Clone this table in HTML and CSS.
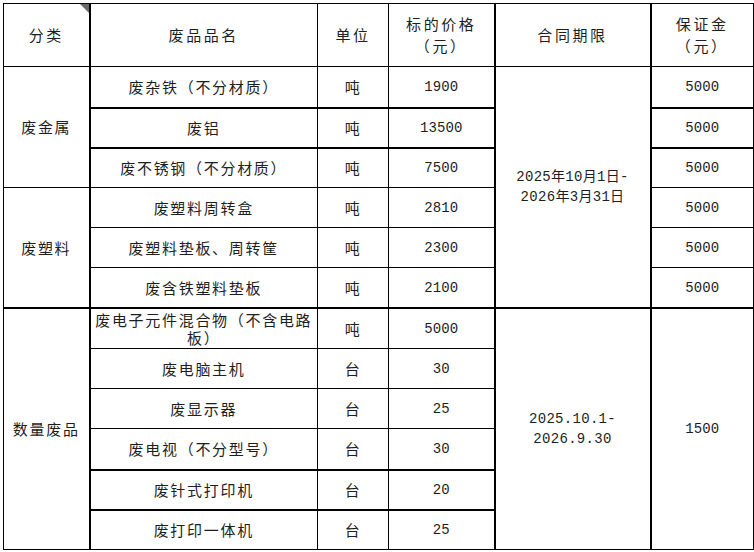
FILE: index.html
```html
<!DOCTYPE html>
<html lang="zh-CN">
<head>
<meta charset="utf-8">
<title>废品价格表</title>
<link rel="stylesheet" href="styles.css">
</head>
<body>
<table class="sheet">
  <colgroup>
    <col class="w1"><col class="w2"><col class="w3"><col class="w4"><col class="w5"><col class="w6">
  </colgroup>
  <thead>
    <tr class="head">
      <th class="cat flagged">分类<span class="flag"></span></th>
      <th>废品品名</th>
      <th>单位</th>
      <th>标的价格<br>（元）</th>
      <th class="term">合同期限</th>
      <th>保证金<br>（元）</th>
    </tr>
  </thead>
  <tbody>
    <tr class="tall">
      <td class="cat" rowspan="3">废金属</td>
      <td>废杂铁（不分材质）</td>
      <td>吨</td>
      <td class="num">1900</td>
      <td class="term date" rowspan="6">2025年10月1日-<br>2026年3月31日</td>
      <td class="num">5000</td>
    </tr>
    <tr class="thick">
      <td>废铝</td>
      <td>吨</td>
      <td class="num">13500</td>
      <td class="num">5000</td>
    </tr>
    <tr class="thick">
      <td>废不锈钢（不分材质）</td>
      <td>吨</td>
      <td class="num">7500</td>
      <td class="num">5000</td>
    </tr>
    <tr>
      <td class="cat" rowspan="3">废塑料</td>
      <td>废塑料周转盒</td>
      <td>吨</td>
      <td class="num">2810</td>
      <td class="num">5000</td>
    </tr>
    <tr>
      <td>废塑料垫板、周转筐</td>
      <td>吨</td>
      <td class="num">2300</td>
      <td class="num">5000</td>
    </tr>
    <tr>
      <td>废含铁塑料垫板</td>
      <td>吨</td>
      <td class="num">2100</td>
      <td class="num">5000</td>
    </tr>
    <tr class="thick-tall">
      <td class="cat" rowspan="6">数量废品</td>
      <td class="wrap">废电子元件混合物（不含电路板）</td>
      <td>吨</td>
      <td class="num">5000</td>
      <td class="term date" rowspan="6">2025.10.1-<br>2026.9.30</td>
      <td class="num" rowspan="6">1500</td>
    </tr>
    <tr>
      <td>废电脑主机</td>
      <td>台</td>
      <td class="num">30</td>
    </tr>
    <tr>
      <td>废显示器</td>
      <td>台</td>
      <td class="num">25</td>
    </tr>
    <tr class="tall">
      <td>废电视（不分型号）</td>
      <td>台</td>
      <td class="num">30</td>
    </tr>
    <tr class="thick">
      <td>废针式打印机</td>
      <td>台</td>
      <td class="num">20</td>
    </tr>
    <tr class="thick">
      <td>废打印一体机</td>
      <td>台</td>
      <td class="num">25</td>
    </tr>
  </tbody>
</table>
</body>
</html>
```
FILE: styles.css
```css
html, body {
  margin: 0;
  padding: 0;
  background: #ffffff;
}

body {
  font-family: "Noto Sans CJK SC", "Noto Sans", sans-serif;
  color: #1e1e1e;
  text-spacing-trim: space-all;
}

.sheet {
  border-collapse: collapse;
  table-layout: fixed;
  width: 750px;
  margin: 3px 0 0 3px;
}

.w1 { width: 86px; }
.w2 { width: 228px; }
.w3 { width: 71px; }
.w4 { width: 106px; }
.w5 { width: 156px; }
.w6 { width: 103px; }

.sheet th,
.sheet td {
  border: 1px solid #000;
  text-align: center;
  vertical-align: middle;
  padding: 0 2px;
  font-weight: normal;
  text-spacing-trim: space-all;
}

.sheet td {
  font-size: 15px;
  letter-spacing: 1.7px;
  line-height: 18px;
  height: 39px;
}

.sheet th {
  font-size: 15px;
  letter-spacing: 2.6px;
  line-height: 22px;
}

.head {
  height: 63px;
}

.sheet tr.tall > td {
  height: 40px;
}

.sheet tr.thick > td {
  border-top-width: 2px;
  height: 38px;
}

.sheet tr.thick-tall > td {
  border-top-width: 2px;
  height: 39px;
}

.sheet .cat {
  border-right-width: 2px;
}

.sheet .term {
  border-left-width: 2px;
  border-right-width: 2px;
}

.sheet td.num {
  font-family: "Liberation Mono", monospace;
  font-size: 14px;
  letter-spacing: 0.1px;
}

.sheet td.date {
  font-family: "Liberation Mono", "Noto Sans CJK SC", monospace;
  font-size: 14px;
  line-height: 20px;
  letter-spacing: 0.3px;
}

.flagged {
  position: relative;
}

.flag {
  position: absolute;
  top: 0;
  right: 0;
  width: 0;
  height: 0;
  border-top: 9px solid #6a6a6a;
  border-left: 9px solid transparent;
}
```
